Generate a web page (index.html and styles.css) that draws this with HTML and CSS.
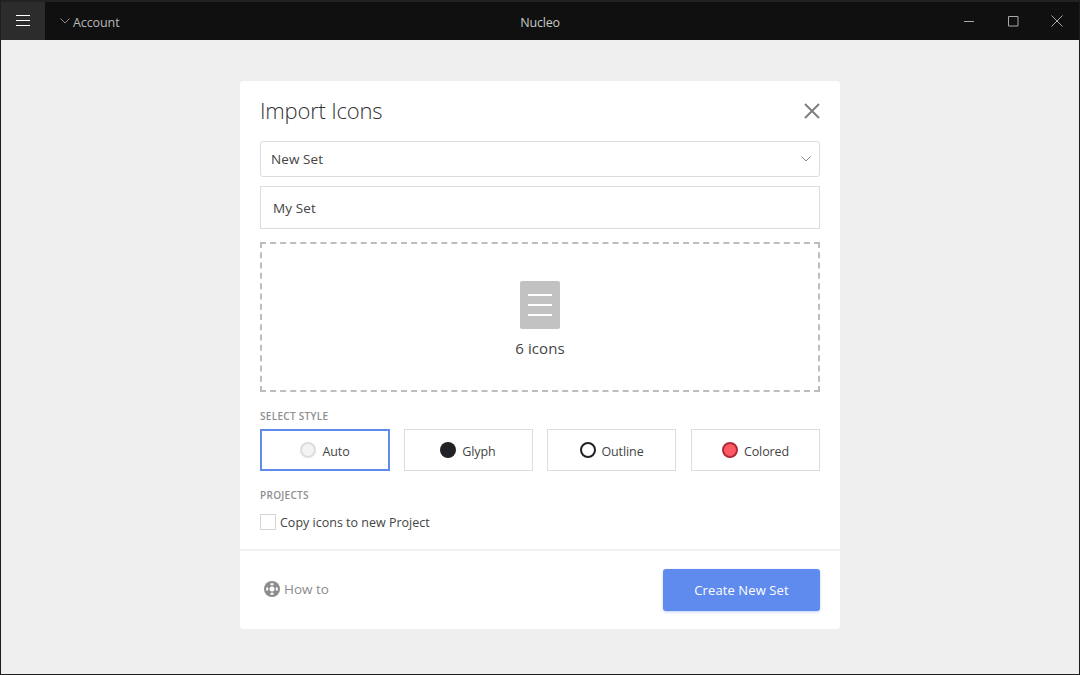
FILE: index.html
```html
<!DOCTYPE html>
<html lang="en">
<head>
<meta charset="utf-8">
<title>Nucleo</title>
<link rel="stylesheet" href="styles.css">
</head>
<body>
<div class="window">
  <header class="titlebar">
    <div class="left">
      <button class="menu-btn" aria-label="Menu">
        <svg class="burger" width="14" height="11" viewBox="0 0 14 11"><path d="M0 .5h14M0 5.500h14M0 10.500h14" stroke="#fff" stroke-width="1" fill="none"/></svg>
      </button>
      <div class="account">
        <svg width="10" height="6" viewBox="0 0 10 6"><path d="M.5.500l4.500 4.500 4.500-4.500" stroke="#8a8a8a" fill="none"/></svg>
        <span>Account</span>
      </div>
    </div>
    <div class="app-title">Nucleo</div>
    <div class="controls">
      <span class="ctl"><svg width="11" height="11" viewBox="0 0 11 11"><path d="M0 5.500h10" stroke="#a8a8a8" fill="none"/></svg></span>
      <span class="ctl"><svg width="11" height="11" viewBox="0 0 11 11"><path d="M.5.500h9.500v9.500h-9.500z" stroke="#a8a8a8" fill="none"/></svg></span>
      <span class="ctl"><svg width="12" height="12" viewBox="0 0 12 12"><path d="M.5.500l11 11M11.500.500l-11 11" stroke="#a8a8a8" fill="none"/></svg></span>
    </div>
  </header>
  <main class="stage">
    <section class="card">
      <div class="card-body">
        <div class="card-head">
          <h1>Import Icons</h1>
          <svg class="close" width="16" height="16" viewBox="0 0 16 16"><path d="M1 1l14 14M15 1L1 15" stroke="#808080" stroke-width="2" fill="none"/></svg>
        </div>
        <div class="select">
          <span>New Set</span>
          <svg width="10" height="6" viewBox="0 0 10 6"><path d="M.5.500l4.500 4.500 4.500-4.500" stroke="#888" fill="none"/></svg>
        </div>
        <div class="input">My Set</div>
        <div class="drop">
          <div class="file"><i></i><i></i><i></i></div>
          <div class="count">6 icons</div>
        </div>
        <div class="label style-label">SELECT STYLE</div>
        <div class="styles">
          <div class="style active"><span class="dot dot-auto"></span>Auto</div>
          <div class="style"><span class="dot dot-glyph"></span>Glyph</div>
          <div class="style"><span class="dot dot-outline"></span>Outline</div>
          <div class="style last"><span class="dot dot-colored"></span>Colored</div>
        </div>
        <div class="label projects-label">PROJECTS</div>
        <div class="check"><span class="box"></span>Copy icons to new Project</div>
      </div>
      <footer class="card-foot">
        <div class="howto">
          <svg width="16" height="16" viewBox="0 0 16 16"><circle cx="8" cy="8" r="8" fill="#8c8c8c"/><circle cx="8" cy="8" r="2.500" fill="#fff"/><path d="M2.200 6.500h2v3h-2zM11.800 6.500h2v3h-2zM6.500 2.200h3v2h-3zM6.500 11.800h3v2h-3z" fill="#fff"/></svg>
          <span>How to</span>
        </div>
        <button class="primary">Create New Set</button>
      </footer>
    </section>
  </main>
</div>
</body>
</html>
```
FILE: styles.css
```css
* { box-sizing: border-box; }
html, body { margin: 0; height: 100%; }
body { font-family: "Open Sans", "Noto Sans", sans-serif; color: #3c3c3c; background: #efefef; overflow: hidden; }
.window { width: 1080px; height: 675px; display: flex; flex-direction: column; border: 1px solid #1d1d1d; border-top: 0; }
.titlebar { height: 40px; flex: none; background: #101010; border-top: 2px solid #222; display: grid; grid-template-columns: 1fr auto 1fr; align-items: center; }
.left { display: flex; align-items: center; height: 100%; }
.menu-btn { width: 44px; height: 38px; background: #2c2c2c; border: 0; padding: 0; display: flex; align-items: center; justify-content: center; }
.burger { margin-bottom: 1px; }
.account { display: flex; align-items: center; gap: 3px; margin-left: 15px; color: #b9b9b9; font-size: 12.500px; letter-spacing: -0.100px; padding-top: 2px; }
.account svg { margin-bottom: 2px; }
.app-title { color: #c8c8c8; font-size: 12.500px; letter-spacing: -0.200px; padding-top: 2px; }
.controls { display: flex; justify-content: flex-end; height: 100%; }
.ctl { width: 44px; display: flex; align-items: center; justify-content: center; }
.stage { flex: 1; display: flex; justify-content: center; padding-top: 41px; }
.card { width: 600px; height: 548px; background: #fff; border-radius: 4px; display: flex; flex-direction: column; }
.card-body { padding: 0 20px; height: 468px; }
.card-head { height: 60px; display: flex; align-items: center; justify-content: space-between; }
h1 { margin: 0 0 2px; font-size: 22px; font-weight: 300; color: #333; letter-spacing: -0.200px; }
.select { height: 36px; border: 1px solid #dcdcdc; border-radius: 3px; display: flex; align-items: center; justify-content: space-between; padding: 0 8px 0 10px; font-size: 13.500px; letter-spacing: 0.100px; color: #444; }
.input { height: 43px; margin-top: 9px; border: 1px solid #dcdcdc; padding-left: 12px; display: flex; align-items: center; font-size: 13.500px; letter-spacing: 0.100px; color: #444; }
.drop { height: 150px; margin-top: 13px; border: 2px dashed #bdbdbd; display: flex; flex-direction: column; align-items: center; padding-top: 37px; }
.file { width: 40px; height: 48px; background: #c2c2c2; border-radius: 2px; display: flex; flex-direction: column; align-items: center; justify-content: center; gap: 8px; }
.file i { display: block; width: 24px; height: 2px; background: #fff; }
.count { margin-top: 9px; font-size: 15px; color: #444; letter-spacing: 0.100px; line-height: 20px; }
.label { font-size: 10px; font-weight: 600; color: #8e8e8e; line-height: 12px; letter-spacing: 0.300px; }
.style-label { margin-top: 18px; }
.styles { margin-top: 7px; display: grid; grid-template-columns: 130px 129px 129px 130px; column-gap: 14px; }
.style { height: 42px; border: 1px solid #dcdcdc; display: flex; align-items: center; justify-content: center; gap: 6px; font-size: 12.500px; letter-spacing: -0.100px; color: #444; padding-top: 2px; }
.style.last { width: 129px; justify-self: end; }
.style.active { border: 2px solid #5f8bee; }
.dot { width: 16px; height: 16px; border-radius: 50%; flex: none; margin: -3px 0 0 0; }
.dot-auto { background: #f3f3f3; border: 2px solid #dcdcdc; }
.dot-glyph { background: #212226; margin-left: -1px; }
.dot-outline { border: 2px solid #212226; background: #fff; margin-left: 1px; margin-right: -1px; }
.dot-colored { background: #ff5a64; border: 2px solid #b02a3a; }
.projects-label { margin-top: 18px; }
.check { margin-top: 13px; display: flex; align-items: center; gap: 4px; font-size: 12.500px; letter-spacing: 0; color: #444; height: 16px; }
.box { width: 16px; height: 16px; border: 1px solid #d4d4d4; flex: none; }
.card-foot { border-top: 2px solid #f0f0f0; flex: 1; display: flex; align-items: center; justify-content: space-between; padding: 0 20px 0 24px; }
.howto { display: flex; align-items: center; gap: 4px; color: #8c8c8c; font-size: 13.500px; margin-bottom: 2px; }
.primary { width: 157px; height: 42px; background: #5f8bee; border: 0; border-radius: 3px; color: #fff; font: 13px "Open Sans", sans-serif; letter-spacing: 0.100px; box-shadow: 0 1px 3px rgba(95,139,238,.4); }
```
